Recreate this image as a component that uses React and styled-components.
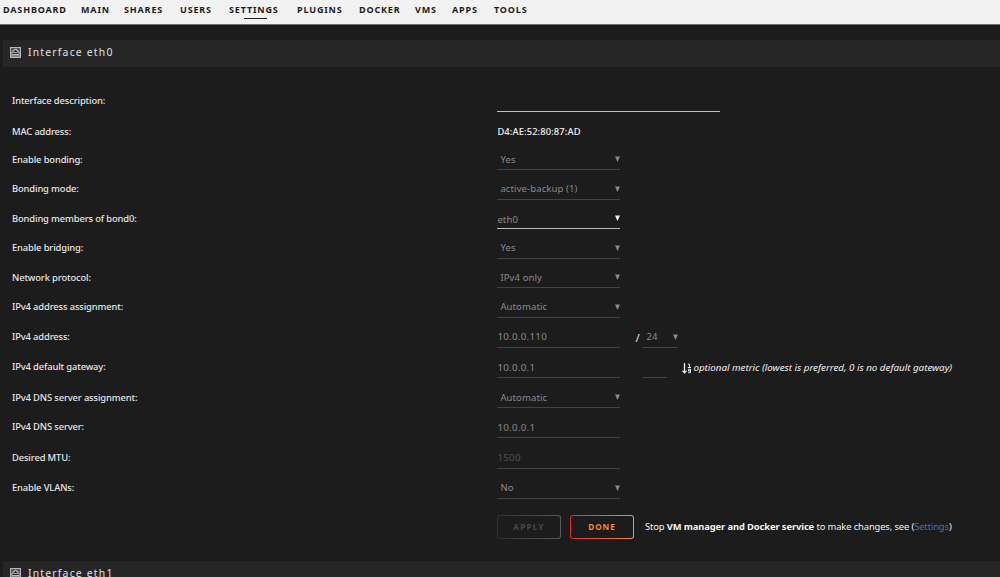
import styled, { createGlobalStyle } from "styled-components";

const tabs = [
    { name: "DASHBOARD", width: 63 },
    { name: "MAIN", width: 28 },
    { name: "SHARES", width: 41 },
    { name: "USERS", width: 34 },
    { name: "SETTINGS", width: 53, active: true },
    { name: "PLUGINS", width: 47 },
    { name: "DOCKER", width: 41 },
    { name: "VMS", width: 22 },
    { name: "APPS", width: 27 },
    { name: "TOOLS", width: 33 },
]

function PortIcon(){
    return (
        <StyledIcon width="11" height="11" viewBox="0 0 11 11">
            <rect x="0.5" y="0.5" width="10" height="10" fill="#55585d" stroke="#b4b6ba" />
            <path d="M2 7.5V5h1.2V3.6h1.2V2.4h2.2v1.2h1.2V5H9v2.5z" fill="#2c2e33" stroke="#d6d6d6" strokeWidth="0.8" />
            <path d="M3.5 5.5h4" stroke="#a9a9a9" />
            <path d="M1 9h9" stroke="#b4b6ba" />
        </StyledIcon>
    )
}

function SortIcon(){
    return (
        <svg width="10" height="11" viewBox="0 0 10 11" fill="none" stroke="#f2f2f2">
            <path d="M2.5 0v9M0.5 7.7l2 2.2 2-2.2" strokeWidth="1.3" />
            <path d="M6 1.2h1.5V4.5M5.8 4.5h3.2" />
            <path d="M8.4 8H6.5V6.3h2v3.4H6.2" />
        </svg>
    )
}

function Select({ value, width = 123, bright, flush, drop }){
    return (
        <Field $width={width} $bright={bright}>
            <Value $indent={flush ? 0 : 3} $drop={drop}>{value}</Value>
            <Arrow $bright={bright} viewBox="0 0 5 6"><path d="M0 0.5h5L2.5 6z" /></Arrow>
        </Field>
    )
}

function Row({ label, height, low, children }){
    return (
        <StyledRow $height={height}>
            <Label $low={low}>{label}</Label>
            {children}
        </StyledRow>
    )
}

function App(){
    return (
        <Page>
            <GlobalStyle />
            <Menu>
                {tabs.map((tab) => (
                    <Tab key={tab.name} $width={tab.width} $active={tab.active}>{tab.name}</Tab>
                ))}
            </Menu>
            <Title><PortIcon />Interface eth0</Title>
            <Form>
                <Row label="Interface description:" height={31}>
                    <Field $width={223} $bright />
                </Row>
                <Row label="MAC address:" height={30} low><Mac>D4:AE:52:80:87:AD</Mac></Row>
                <Row label="Enable bonding:" height={28} low><Select value="Yes" drop={1} /></Row>
                <Row label="Bonding mode:" height={30}><Select value="active-backup (1)" /></Row>
                <Row label="Bonding members of bond0:" height={29} low>
                    <Select value="eth0" bright flush drop={4} />
                </Row>
                <Row label="Enable bridging:" height={30}><Select value="Yes" /></Row>
                <Row label="Network protocol:" height={29} low><Select value="IPv4 only" drop={1} /></Row>
                <Row label="IPv4 address assignment:" height={30}><Select value="Automatic" /></Row>
                <Row label="IPv4 address:" height={30}>
                    <Field $width={123}><Value $digits>10.0.0.110</Value></Field>
                    <Slash>/</Slash>
                    <Select value="24" width={35} />
                </Row>
                <Row label="IPv4 default gateway:" height={30}>
                    <Field $width={123}><Value $digits $drop={1}>10.0.0.1</Value></Field>
                    <Metric $width={24} />
                    <Hint><SortIcon /><em>optional metric (lowest is preferred, 0 is no default gateway)</em></Hint>
                </Row>
                <Row label="IPv4 DNS server assignment:" height={30} low><Select value="Automatic" drop={1} /></Row>
                <Row label="IPv4 DNS server:" height={30}>
                    <Field $width={123}><Value $digits $drop={1}>10.0.0.1</Value></Field>
                </Row>
                <Row label="Desired MTU:" height={31}>
                    <Field $width={123}><Value $digits $faint>1500</Value></Field>
                </Row>
                <Row label="Enable VLANs:" height={30}><Select value="No" /></Row>
            </Form>
            <Actions>
                <Button disabled>APPLY</Button>
                <Button>DONE</Button>
                <Notice>
                    Stop <b>VM manager and Docker service</b> to make changes, see (<a>Settings</a>)
                </Notice>
            </Actions>
            <Title><PortIcon />Interface eth1</Title>
        </Page>
    )
}

const GlobalStyle = createGlobalStyle`

    body {
        margin: 0;
        background: #1c1c1c;
        overflow: hidden;
    }

`

const Page = styled.div`

    height: 577px;
    overflow: hidden;
    background: #1c1c1c;
    color: #e6e6e6;
    font-family: "Noto Sans", sans-serif;
    font-size: 9.4px;

`

const Menu = styled.nav`

    display: flex;
    gap: 15px;
    box-sizing: border-box;
    height: 25px;
    padding-left: 3px;
    background: #f2f2f2;
    border-bottom: 1px solid #6b6d6d;

`

const Tab = styled.div`

    position: relative;
    width: ${(props) => props.$width}px;
    color: #1c1c1c;
    font-size: 9px;
    font-weight: bold;
    letter-spacing: 0.85px;
    line-height: 20px;
    white-space: nowrap;

    &::after {
        content: "";
        display: ${(props) => (props.$active ? "block" : "none")};
        position: absolute;
        left: 15px;
        top: 17.5px;
        width: 23px;
        height: 1.5px;
        background: #1c1c1c;
    }

`

const Title = styled.div`

    display: flex;
    align-items: center;
    box-sizing: border-box;
    height: 27px;
    margin: 15px 0 0 3px;
    padding: 0 0 3px 7px;
    background: #262626;
    color: #e0e0e0;
    font-size: 10.4px;
    line-height: 12px;
    letter-spacing: 1.2px;

`

const StyledIcon = styled.svg`

    margin-right: 7px;

`

const Form = styled.div`

    padding: 14px 0 0 12px;

`

const StyledRow = styled.div`

    display: flex;
    align-items: flex-end;
    height: ${(props) => props.$height}px;
    line-height: 20px;

`

const Label = styled.div`

    width: 485.4px;
    font-weight: 500;
    letter-spacing: -0.14px;
    padding-bottom: ${(props) => (props.$low ? 0 : 1)}px;

`

const Field = styled.div`

    display: flex;
    justify-content: space-between;
    align-items: center;
    box-sizing: border-box;
    width: ${(props) => props.$width}px;
    height: 21px;
    border-bottom: 1px solid ${(props) => (props.$bright ? "#bcbcbc" : "#424242")};

`

const Metric = styled(Field)`

    margin-left: 23px;

`

const Value = styled.span`

    padding-left: ${(props) => props.$indent || 0}px;
    padding-top: ${(props) => props.$drop || 0}px;
    color: ${(props) => (props.$faint ? "#505050" : "#8a8a8a")};
    font-size: ${(props) => (props.$digits ? "9.8px" : "9.5px")};
    letter-spacing: ${(props) => (props.$digits ? "0.25px" : "0.12px")};

`

const Arrow = styled.svg`

    width: 5px;
    height: 6px;
    fill: ${(props) => (props.$bright ? "#f2f2f2" : "#8a8a8a")};

`

const Mac = styled.div`

    padding-bottom: 0.5px;
    color: #f2f2f2;
    font-weight: 500;
    letter-spacing: 0.1px;

`

const Slash = styled.div`

    width: 8px;
    margin-left: 15px;
    font-size: 11.5px;

`

const Hint = styled.div`

    display: flex;
    align-items: center;
    gap: 1px;
    margin-left: 15px;

    em {
        color: #f0f0f0;
        font-size: 9.8px;
        letter-spacing: -0.02px;
        white-space: nowrap;
    }

`

const Actions = styled.div`

    display: flex;
    align-items: center;
    height: 24px;
    margin: 16px 0 22px 497px;

`

const Button = styled.button`

    box-sizing: border-box;
    width: 64px;
    height: 24px;
    margin-right: 9px;
    padding: 0 0 1px;
    border: 1.5px solid transparent;
    border-radius: 3px;
    background:
        linear-gradient(#1c1c1c, #1c1c1c) padding-box,
        linear-gradient(90deg, #e22828, #ff8c2f) border-box;
    color: #f08a30;
    font-family: inherit;
    font-size: 8.2px;
    font-weight: bold;
    letter-spacing: 0.9px;

    &:disabled {
        background:
            linear-gradient(#1c1c1c, #1c1c1c) padding-box,
            linear-gradient(90deg, #303030, #5a5a5a) border-box;
        color: #484848;
        letter-spacing: 1.2px;
    }

`

const Notice = styled.div`

    margin-left: 2px;
    padding-bottom: 2px;
    color: #f2f2f2;
    letter-spacing: -0.12px;
    white-space: nowrap;

    a {
        color: #486dba;
    }

`

export default App
